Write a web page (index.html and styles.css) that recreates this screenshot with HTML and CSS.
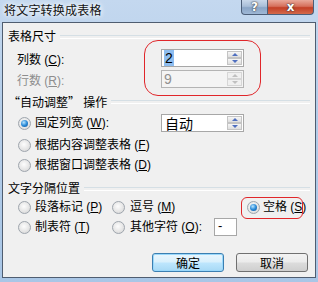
FILE: index.html
```html
<!DOCTYPE html>
<html lang="zh-CN">
<head>
  <meta charset="UTF-8" />
  <title>将文字转换成表格</title>
  <link rel="stylesheet" href="styles.css">
</head>
<body>
  <div class="window">
    <div class="titlebar">
      <span class="title">将文字转换成表格</span>
      <div class="caption-btns">
        <span class="cap-btn help">?</span>
        <span class="cap-btn close">x</span>
      </div>
    </div>

    <div class="client">
      <!-- 表格尺寸 -->
      <div class="group-title first">表格尺寸</div>
      <div class="field-row rows-1">
        <label>列数 (<u>C</u>):</label>
        <div class="spin">
          <span class="value"><span class="selected">2</span></span>
          <div class="spin-btns">
            <span class="spin-btn up"></span>
            <span class="spin-btn down"></span>
          </div>
        </div>
      </div>
      <div class="field-row rows-2 disabled">
        <label>行数 (<u>R</u>):</label>
        <div class="spin">
          <span class="value">9</span>
          <div class="spin-btns">
            <span class="spin-btn up"></span>
            <span class="spin-btn down"></span>
          </div>
        </div>
      </div>

      <!-- 自动调整 -->
      <div class="group-title second"><span><span class="q">“</span>自动调整<span class="q">”</span> 操作</span></div>
      <div class="radio-row fixed-width">
        <div class="option"><span class="radio checked"></span><span>固定列宽 (<u>W</u>):</span></div>
        <div class="spin">
          <span class="value cjk">自动</span>
          <div class="spin-btns">
            <span class="spin-btn up"></span>
            <span class="spin-btn down"></span>
          </div>
        </div>
      </div>
      <div class="radio-row r2">
        <div class="option"><span class="radio"></span><span>根据内容调整表格 (<u>F</u>)</span></div>
      </div>
      <div class="radio-row">
        <div class="option"><span class="radio"></span><span>根据窗口调整表格 (<u>D</u>)</span></div>
      </div>

      <!-- 文字分隔位置 -->
      <div class="group-title third">文字分隔位置</div>
      <div class="sep-grid">
        <div class="option"><span class="radio"></span><span>段落标记 (<u>P</u>)</span></div>
        <div class="option"><span class="radio"></span><span>逗号 (<u>M</u>)</span></div>
        <div class="option"><span class="radio checked"></span><span>空格 (<u>S</u>)</span></div>
        <div class="option"><span class="radio"></span><span>制表符 (<u>T</u>)</span></div>
        <div class="option">
          <span class="radio"></span><span class="other-label">其他字符 (<u>O</u>):</span>
          <span class="small-input">-</span>
        </div>
        <div></div>
      </div>

      <div class="buttons">
        <button class="btn default">确定</button>
        <button class="btn">取消</button>
      </div>
    </div>

    <!-- red annotation marks -->
    <div class="mark mark-size"></div>
    <div class="mark mark-space"></div>
  </div>
</body>
</html>
```

FILE: styles.css
```css
* {
  box-sizing: border-box;
  margin: 0;
  padding: 0;
}

body {
  font-family: "Liberation Sans", "Noto Sans CJK SC", sans-serif;
  font-size: 12px;
  color: #000;
  background: #b9d1ea;
}

.window {
  position: relative;
  width: 318px;
  height: 282px;
  padding: 0 2px 4px 2px;
  background: linear-gradient(#c4d8ef, #b3cde9 40%, #a9c6e6);
  display: flex;
  flex-direction: column;
}

/* Title bar */
.titlebar {
  height: 22px;
  display: flex;
  justify-content: space-between;
  padding-left: 2px;
  padding-right: 2px;
}

.title {
  line-height: 22px;
  font-size: 12px;
  color: #111;
  text-shadow: 0 0 4px #fff, 0 0 6px #fff;
  letter-spacing: 0.2px;
}

.caption-btns {
  display: flex;
  height: 15px;
  align-self: flex-start;
}

.cap-btn {
  display: flex;
  justify-content: center;
  align-items: center;
  height: 15px;
  border: 1px solid #4c5e78;
  border-top: none;
  color: #fff;
  font-family: "DejaVu Sans", sans-serif;
  font-weight: bold;
  font-size: 12px;
  text-shadow: 0 0 1px #333, 0 0 2px #333;
}

.cap-btn.help {
  width: 27px;
  border-radius: 0 0 0 4px;
  background: linear-gradient(#c9d8ea, #a9bed8 45%, #8aa5c6 55%, #9fb8d6);
}

.cap-btn.close {
  width: 46px;
  border-left: none;
  border-radius: 0 0 4px 0;
  background: linear-gradient(#e9a89a, #d6705c 45%, #c33f26 55%, #d46a4c);
}

/* Client area */
.client {
  flex: 1;
  background: #f0f0f0;
  border: 1px solid #4f5d70;
  display: flex;
  flex-direction: column;
}

.group-title {
  height: 14px;
  line-height: 14px;
  display: flex;
  align-items: center;
  gap: 4px;
  padding-left: 5px;
  padding-right: 5px;
}

.group-title::after {
  content: "";
  flex: 1;
  height: 2px;
  border-top: 1px solid #d5dfe5;
  border-bottom: 1px solid #fff;
}

.group-title.first { margin-top: 7px; }
.group-title.second { margin-top: 6px; }
.group-title.third { margin-top: 7px; }

.q {
  font-family: "Noto Sans CJK SC", sans-serif;
  display: inline-block;
  width: 12px;
  text-align: center;
}

u {
  text-decoration: underline;
  text-underline-offset: 1px;
}

.field-row {
  height: 20px;
  display: grid;
  grid-template-columns: 144px 83px;
  align-items: center;
  padding-left: 14px;
}

.field-row.rows-1 { margin-top: 4px; }
.field-row.rows-2 { margin-top: 1px; }

.field-row.disabled label { color: #8d8d8d; }

/* spin edit */
.spin {
  height: 18px;
  border: 1px solid #a7a7a7;
  background: #fff;
  display: flex;
  align-items: center;
  justify-content: space-between;
  padding: 1px 1px 1px 2px;
}

.disabled .spin {
  background: #f4f4f4;
  border-color: #b4b4b4;
}

.value {
  font-family: "Liberation Sans", sans-serif;
  font-size: 14px;
  line-height: 14px;
}

.value.cjk {
  font-family: "Noto Sans CJK SC", sans-serif;
  font-size: 14px;
  padding-left: 1px;
}

.selected {
  background: #8dbdf0;
  color: #000;
  padding: 0 1px;
}

.disabled .value { color: #909090; }

.spin-btns {
  width: 15px;
  height: 14px;
  display: flex;
  flex-direction: column;
}

.spin-btn {
  flex: 1;
  border: 1px solid #c4c4c4;
  background: linear-gradient(#f6f6f6, #dedede);
  display: flex;
  justify-content: center;
  align-items: center;
}

.spin-btn.up::before {
  content: "";
  border-left: 3px solid transparent;
  border-right: 3px solid transparent;
  border-bottom: 3px solid #4f6fbf;
}

.spin-btn.down::before {
  content: "";
  border-left: 3px solid transparent;
  border-right: 3px solid transparent;
  border-top: 3px solid #4f6fbf;
}

.disabled .spin-btn {
  background: #f0f0f0;
  border-color: #d6d6d6;
}

.disabled .spin-btn.up::before { border-bottom-color: #c0c0c0; }
.disabled .spin-btn.down::before { border-top-color: #c0c0c0; }

/* radio rows */
.radio-row {
  height: 20px;
  display: grid;
  grid-template-columns: 143px 83px;
  align-items: center;
  padding-left: 15px;
}

.radio-row.fixed-width { margin-top: 4px; }
.radio-row.r2 { margin-top: 2px; }

.option {
  display: flex;
  align-items: center;
  gap: 4px;
  white-space: nowrap;
  line-height: 14px;
}

.radio {
  width: 13px;
  height: 13px;
  flex: none;
  border-radius: 50%;
  border: 1px solid #9ea5ad;
  background: radial-gradient(circle at 45% 40%, #fdfdfd, #e4e4e4 60%, #cfcfcf);
  display: flex;
  justify-content: center;
  align-items: center;
}

.radio.checked::after {
  content: "";
  width: 7px;
  height: 7px;
  border-radius: 50%;
  background: radial-gradient(circle at 40% 35%, #b9e6ff, #2a8ad8 50%, #0e4f93);
}

.sep-grid {
  margin-top: 1px;
  display: grid;
  grid-template-columns: 94px 135px 1fr;
  grid-auto-rows: 20px;
  align-items: center;
  padding-left: 15px;
}

.sep-grid .option:nth-child(2),
.sep-grid .option:nth-child(5) {
  gap: 5px;
}

.sep-grid .option:nth-child(3) { gap: 3px; }

.other-label {
  width: 79px;
}

.small-input {
  width: 23px;
  height: 18px;
  background: #fff;
  border: 1px solid #a7a7a7;
  font-family: "Liberation Sans", sans-serif;
  font-size: 13px;
  line-height: 14px;
  padding-left: 3px;
}

/* bottom buttons */
.buttons {
  margin-top: 16px;
  display: flex;
  justify-content: flex-end;
  gap: 12px;
  padding-right: 7px;
}

.btn {
  width: 72px;
  height: 19px;
  font-family: "Noto Sans CJK SC", sans-serif;
  font-size: 12px;
  line-height: 14px;
  color: #000;
  border: 1px solid #707070;
  border-radius: 3px;
  background: linear-gradient(#f2f2f2, #ebebeb 48%, #dcdcdc 52%, #cfcfcf);
}

.btn.default {
  border-color: #3c7fb1;
  box-shadow: inset 0 0 0 1px #9ad8fb;
  background: linear-gradient(#eaf6fd, #d9f0fc 48%, #bee6fd 52%, #a7d9f5);
}

/* red annotation marks */
.mark {
  position: absolute;
  border: 1.5px solid #e0262a;
}

.mark-size {
  left: 144px;
  top: 40px;
  width: 117px;
  height: 56px;
  border-radius: 14px;
}

.mark-space {
  left: 241px;
  top: 197px;
  width: 62px;
  height: 22px;
  border-radius: 6px;
}
```
